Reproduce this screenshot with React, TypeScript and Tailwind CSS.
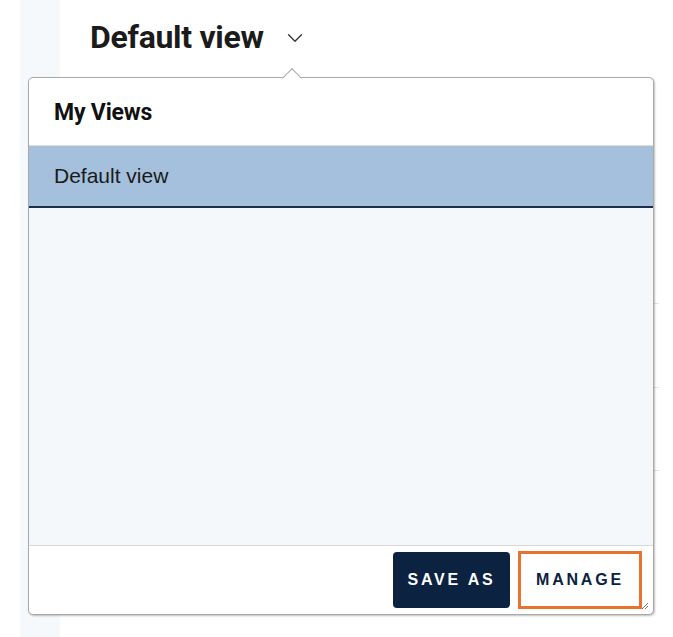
import { ChevronDown } from "lucide-react";

const ViewsPopup = () => {
  return (
    <div className="absolute left-[28px] top-[77px] w-[626px] h-[538px] bg-white border border-[#a9a9a9] rounded-[5px] shadow-[1px_1px_2px_rgba(0,0,0,0.25)] flex flex-col">
      {/* caret */}
      <div className="absolute left-[256px] top-[-7px] w-[14px] h-[14px] rotate-45 bg-white border-l border-t border-[#a9a9a9]" />
      <div className="h-[68px] flex items-center px-[25px] pt-[4px] border-b border-[#dedede] relative">
        <span className="text-[23px] font-bold text-[#111] tracking-[-0.2px] font-['Roboto',sans-serif]">My Views</span>
      </div>
      <div className="h-[62px] bg-[#a4c0dc] border-b-2 border-[#1c2e48] flex items-center px-[25px]">
        <span className="text-[21px] text-[#1a1a1a] font-['Liberation_Sans',sans-serif]">Default view</span>
      </div>
      <div className="flex-1 bg-[#f5f8fa] border-b border-[#d8d8d8]" />
      <div className="h-[68px] flex items-center justify-end gap-[8px] pr-[11px] relative">
        <button className="w-[117px] h-[56px] rounded-[4px] bg-[#0b2340] text-white text-[16px] font-bold tracking-[2.8px] font-['Liberation_Sans',sans-serif]">
          SAVE AS
        </button>
        <button className="w-[124px] h-[58px] border-[3px] border-[#e8732e] bg-white text-[#0b2340] text-[16px] font-bold tracking-[2.8px] font-['Liberation_Sans',sans-serif]">
          MANAGE
        </button>
        <svg className="absolute right-[4px] bottom-[4px]" width="8" height="8" viewBox="0 0 8 8">
          <path d="M7 1 L1 7 M7 4 L4 7" stroke="#777" strokeWidth="1" />
        </svg>
      </div>
    </div>
  );
};

const App = () => {
  return (
    <div className="relative w-[673px] h-[637px] bg-white overflow-hidden flex">
      <div className="w-[20px]" />
      <div className="w-[40px] h-full bg-[#f6f9fb]" />
      <div className="flex-1 relative">
        <div className="flex items-center gap-[18px] pl-[30px] pt-[13px]">
          <span className="text-[32px] font-bold text-[#1b1b1b] tracking-[-0.3px] font-['Roboto',sans-serif]">Default view</span>
          <ChevronDown size={26} strokeWidth={1.2} className="text-[#333] mt-[2px]" />
        </div>
        <div className="absolute right-[14px] top-[303px] w-[6px] h-px bg-[#e2e2e2]" />
        <div className="absolute right-[14px] top-[387px] w-[6px] h-px bg-[#e2e2e2]" />
        <div className="absolute right-[14px] top-[470px] w-[6px] h-px bg-[#e2e2e2]" />
      </div>
      <ViewsPopup />
    </div>
  );
};

export default App;
